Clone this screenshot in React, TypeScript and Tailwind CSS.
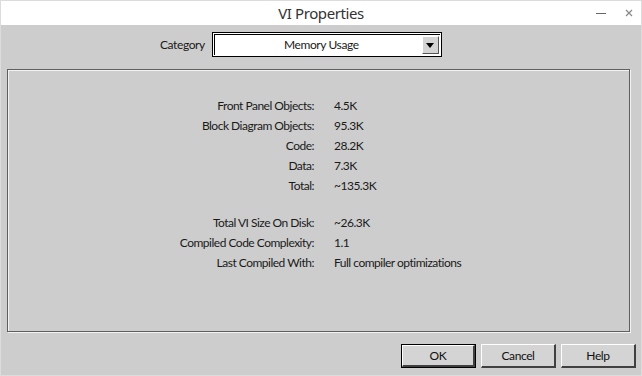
import React from "react";

const memoryRows = [
  { label: "Front Panel Objects:", value: "4.5K" },
  { label: "Block Diagram Objects:", value: "95.3K" },
  { label: "Code:", value: "28.2K" },
  { label: "Data:", value: "7.3K" },
  { label: "Total:", value: "~135.3K" },
];

const diskRows = [
  { label: "Total VI Size On Disk:", value: "~26.3K" },
  { label: "Compiled Code Complexity:", value: "1.1" },
  { label: "Last Compiled With:", value: "Full compiler optimizations" },
];

const Row = ({ label, value }: { label: string; value: string }) => (
  <>
    <div className="h-[20px] flex items-center justify-end">{label}</div>
    <div className="h-[20px] flex items-center">{value}</div>
  </>
);

const DialogButton = ({ label, isDefault }: { label: string; isDefault?: boolean }) => (
  <div
    className={`w-[75px] h-[24px] ${isDefault ? "border border-black" : ""}`}
  >
    <div className="w-full h-full bg-[#d4d4d4] border-t border-l border-t-white border-l-white border-b-2 border-r-2 border-b-[#404040] border-r-[#404040] flex items-center justify-center text-[12px] tracking-[-0.4px] text-[#111]">
      {label}
    </div>
  </div>
);

const App: React.FC = () => {
  return (
    <div className="w-[642px] h-[376px] flex flex-col border border-[#dcdcdc] bg-[#cdcdcd] font-['Lato','Noto_Sans',sans-serif] text-[#1a1a1a]">
      {/* title bar */}
      <div className="h-[24px] bg-white grid grid-cols-[1fr_auto_1fr] items-center">
        <div />
        <div className="text-[15px] tracking-[-0.4px] text-[#333] font-['Noto_Sans',sans-serif] leading-none">
          VI Properties
        </div>
        <div className="flex justify-end items-center gap-[18px] pr-[7px] text-[#777]">
          <div className="w-[10px] h-[1px] bg-[#666]" />
          <svg width="10" height="10" viewBox="0 0 10 10">
            <path d="M2 2 L8 8 M8 2 L2 8" stroke="#888" strokeWidth="1.2" />
          </svg>
        </div>
      </div>

      {/* category */}
      <div className="flex items-center pl-[159px] mt-[7px] gap-[7px]">
        <span className="text-[12px] tracking-[-0.4px]">Category</span>
        <div className="w-[230px] h-[25px] border border-black bg-white p-[1px]">
          <div className="w-full h-full border-t border-l border-black flex">
            <div className="flex-1 flex items-center justify-center text-[12px] tracking-[-0.4px] pl-[6px]">
              Memory Usage
            </div>
            <div className="w-[17px] mr-[1px] my-[1px] bg-[#d4d4d4] border-t border-l border-t-white border-l-white border-b border-r border-b-[#555] border-r-[#555] flex items-center justify-center">
              <svg width="8" height="5" viewBox="0 0 8 5">
                <path d="M0 0 H8 L4 5 Z" fill="#000" />
              </svg>
            </div>
          </div>
        </div>
      </div>

      {/* panel */}
      <div className="ml-[6px] mt-[12px] w-[623px] h-[263px] border border-[#5f5f5f] shadow-[1px_1px_0_#f2f2f2,inset_1px_1px_0_#f2f2f2] text-[12px] tracking-[-0.5px]">
        <div className="grid grid-cols-[306px_1fr] gap-x-[20px] pt-[26px]">
          {memoryRows.map((r) => (
            <Row key={r.label} label={r.label} value={r.value} />
          ))}
          <div className="h-[17px] col-span-2" />
          {diskRows.map((r) => (
            <Row key={r.label} label={r.label} value={r.value} />
          ))}
        </div>
      </div>

      {/* buttons */}
      <div className="flex justify-end gap-[5px] pr-[5px] mt-[12px]">
        <DialogButton label="OK" isDefault />
        <DialogButton label="Cancel" />
        <DialogButton label="Help" />
      </div>
    </div>
  );
};

export default App;
